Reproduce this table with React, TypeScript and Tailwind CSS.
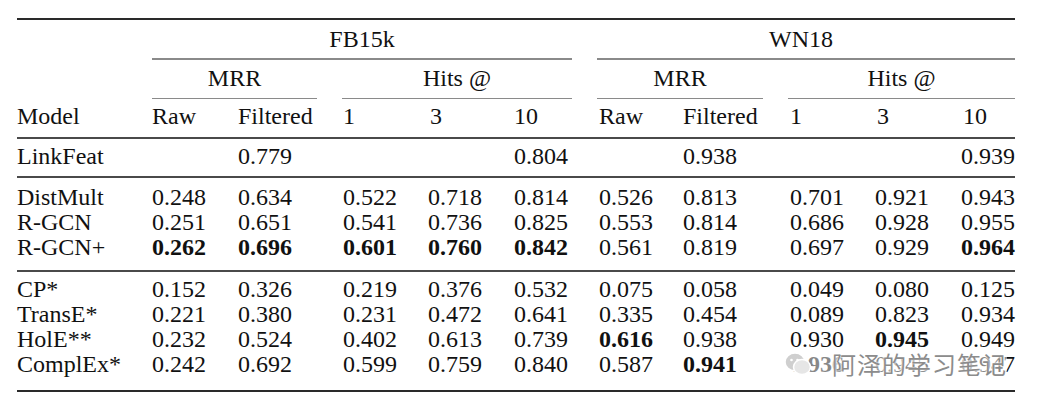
import React from "react";

type Cell = { v: string; b?: boolean };

const cols =
  "grid grid-cols-[135px_86px_105px_85px_86px_85px_84px_107px_85px_86px_54px]";

const row = (name: string, vals: (string | Cell)[]) => ({ name, vals });

const linkFeat = row("LinkFeat", ["", "0.779", "", "", "0.804", "", "0.938", "", "", "0.939"]);

const groupA = [
  row("DistMult", ["0.248", "0.634", "0.522", "0.718", "0.814", "0.526", "0.813", "0.701", "0.921", "0.943"]),
  row("R-GCN", ["0.251", "0.651", "0.541", "0.736", "0.825", "0.553", "0.814", "0.686", "0.928", "0.955"]),
  row("R-GCN+", [
    { v: "0.262", b: true },
    { v: "0.696", b: true },
    { v: "0.601", b: true },
    { v: "0.760", b: true },
    { v: "0.842", b: true },
    "0.561",
    "0.819",
    "0.697",
    "0.929",
    { v: "0.964", b: true },
  ]),
];

const groupB = [
  row("CP*", ["0.152", "0.326", "0.219", "0.376", "0.532", "0.075", "0.058", "0.049", "0.080", "0.125"]),
  row("TransE*", ["0.221", "0.380", "0.231", "0.472", "0.641", "0.335", "0.454", "0.089", "0.823", "0.934"]),
  row("HolE**", ["0.232", "0.524", "0.402", "0.613", "0.739", { v: "0.616", b: true }, "0.938", "0.930", { v: "0.945", b: true }, "0.949"]),
];

const complEx = row("ComplEx*", ["0.242", "0.692", "0.599", "0.759", "0.840", "0.587", { v: "0.941", b: true }, { v: "0.936", b: true }, "0.945", "0.947"]);

function DataRow({ name, vals }: { name: string; vals: (string | Cell)[] }) {
  return (
    <div className={`${cols} h-[25px] leading-[25px] whitespace-nowrap`}>
      <div>{name}</div>
      {vals.map((c, i) => {
        const cell = typeof c === "string" ? { v: c } : c;
        return (
          <div key={i} className={cell.b ? "font-bold" : ""}>
            {cell.v}
          </div>
        );
      })}
    </div>
  );
}

// header group: title centred over its cmidrule
function Group({ title, span, text = "" }: { title: string; span: string; text?: string }) {
  return (
    <div className={`${span} flex flex-col`}>
      <div className={`h-[38px] flex items-center justify-center leading-[25px] ${text}`}>{title}</div>
      <div className="h-[1.5px] bg-[#8a8a8a]" />
    </div>
  );
}

function WeChatMark() {
  return (
    <svg width="28" height="26" viewBox="0 0 28 26">
      <ellipse cx="11" cy="11" rx="10" ry="9" fill="#cfcfcf" stroke="#ffffff" strokeWidth="1.5" />
      <ellipse cx="18" cy="16" rx="8.5" ry="7.5" fill="#e6e6e6" stroke="#ffffff" strokeWidth="1.5" />
      <circle cx="7.5" cy="9" r="1.3" fill="#ffffff" />
      <circle cx="13.5" cy="9" r="1.3" fill="#ffffff" />
    </svg>
  );
}

export default function App() {
  return (
    <div className="w-[1039px] h-[410px] bg-white pt-[18px] pl-[17px] [font-family:'Liberation_Serif','Times_New_Roman',serif] text-[24px] text-[#111111]">
      <div className="w-[998px]">
        <div className="h-[2px] bg-[#2a2a2a]" />

        <div className={cols}>
          <Group title="FB15k" span="col-start-2 col-span-5 mr-[27px]" />
          <Group title="WN18" span="col-span-5 -ml-[2px]" text="pr-[10px]" />
        </div>

        <div className={cols}>
          <Group title="MRR" span="col-start-2 col-span-2 mr-[26px]" />
          <Group title="Hits @" span="col-span-3 -ml-[1px] mr-[27px]" />
          <Group title="MRR" span="col-span-2 -ml-[2px] mr-[27px]" />
          <Group title="Hits @" span="col-span-3 -ml-[2px]" />
        </div>

        <div className={`${cols} h-[38px] items-center leading-[25px] pb-[3px]`}>
          <div>Model</div>
          <div>Raw</div>
          <div>Filtered</div>
          <div>1</div>
          <div className="pl-[2px]">3</div>
          <div>10</div>
          <div>Raw</div>
          <div>Filtered</div>
          <div>1</div>
          <div className="pl-[2px]">3</div>
          <div className="pl-[2px]">10</div>
        </div>

        <div className="h-[2px] bg-[#4a4a4a]" />

        <div className="h-[37px] flex flex-col justify-center pb-[2px]">
          <DataRow {...linkFeat} />
        </div>

        <div className="h-[2px] bg-[#4a4a4a]" />

        <div className="pt-[7px] pb-[10px]">
          {groupA.map((r) => (
            <DataRow key={r.name} {...r} />
          ))}
        </div>

        <div className="h-[2px] bg-[#4a4a4a]" />

        <div className="pt-[5px] pb-[13px]">
          {groupB.map((r) => (
            <DataRow key={r.name} {...r} />
          ))}
          <div className="relative">
            <DataRow {...complEx} />
            <div className="absolute left-[767px] top-[-3px] h-[30px] flex items-center gap-[20px] bg-white/50">
              <WeChatMark />
              <span className="font-['Noto_Sans_CJK_SC',sans-serif] text-[24px] leading-[30px] tracking-[1px] text-[#8c8c8c] [text-shadow:0_0_2px_#fff,0_0_2px_#fff]">
                阿泽的学习笔记
              </span>
            </div>
          </div>
        </div>

        <div className="h-[2px] bg-[#2a2a2a]" />
      </div>
    </div>
  );
}
